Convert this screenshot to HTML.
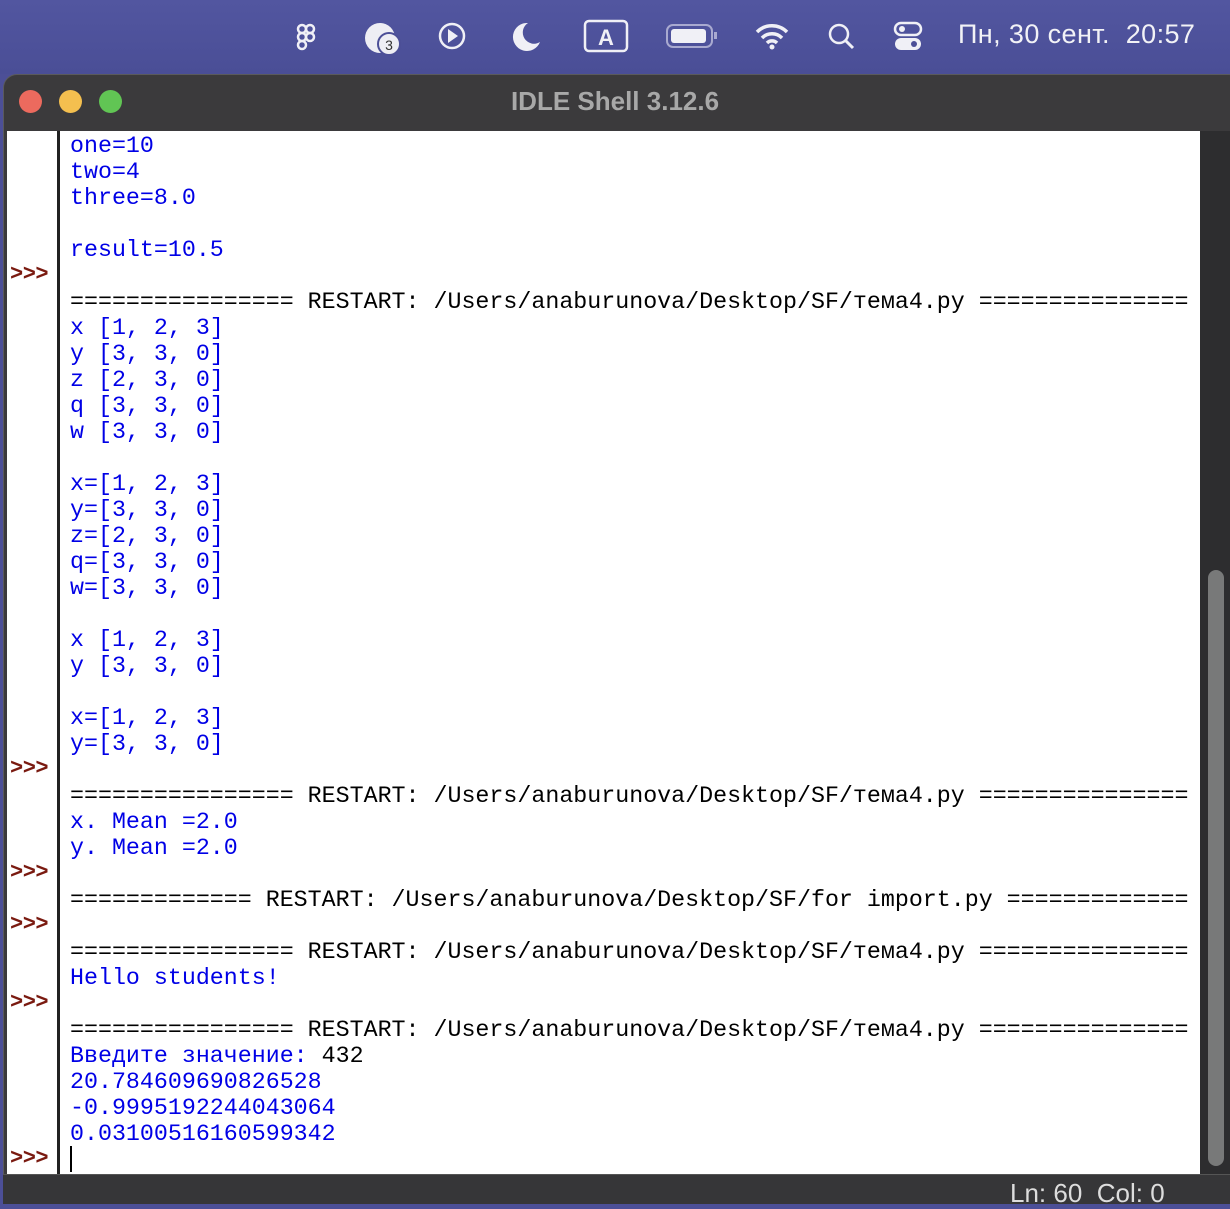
<!DOCTYPE html>
<html><head><meta charset="utf-8"><style>
*{margin:0;padding:0;box-sizing:border-box}
body{width:1230px;height:1194px;overflow:hidden;background:#4c4f97;font-family:"Liberation Sans",sans-serif;position:relative}
.menubar{position:absolute;left:0;top:0;width:1230px;height:74px;background:linear-gradient(#5256a0,#4a4e96)}
.clock{position:absolute;left:958px;top:19px;color:#f2f2f6;font-size:27px;letter-spacing:0.4px}
.win{position:absolute;left:3px;top:74px;width:1240px;height:1130px;background:#3b3a3c;border-radius:14px 14px 0 0;border:1px solid #5a5a5c}
.title{position:absolute;left:0;width:1230px;top:86px;text-align:center;color:#a8a8a8;font-weight:bold;font-size:26px}
.tl{position:absolute;top:90px;width:23px;height:23px;border-radius:50%}
.text{position:absolute;left:7px;top:131px;width:1193px;height:1043px;background:#fff;overflow:hidden}
.gutline{position:absolute;left:50px;top:0;width:3px;height:1043px;background:#222}
.lines{position:absolute;left:63px;top:2px;font-family:"Liberation Mono",monospace;font-size:23.3px;line-height:26px;white-space:pre;color:#0000e6}
.k{color:#000}
.p{position:absolute;left:3px;font-family:"Liberation Mono",monospace;font-size:22px;color:#7a1a10;font-weight:bold;letter-spacing:-0.5px}
.cur{position:absolute;left:63px;top:1015px;width:2px;height:26px;background:#000}
.sb{position:absolute;left:1200px;top:131px;width:30px;height:1043px;background:#2d2d2f}
.thumb{position:absolute;left:1208px;top:570px;width:16px;height:596px;background:#787979;border-radius:8px}
.status{position:absolute;left:3px;top:1174px;width:1230px;height:30px;background:#363638;border-top:1px solid #555}
.st{position:absolute;left:1010px;top:1178px;color:#ddd;font-size:26px;white-space:pre}
</style></head><body>
<div class="menubar">
<svg width="1230" height="74" style="position:absolute;left:0;top:0" fill="none" stroke="#f0f0f6" stroke-width="2.5">
<g transform="translate(297,24)"><rect x="1" y="1" width="8" height="8" rx="4"/><rect x="9" y="1" width="8" height="8" rx="4"/><rect x="1" y="9" width="8" height="8" rx="4"/><circle cx="13" cy="13" r="4"/><rect x="1" y="17" width="8" height="8" rx="4"/></g>
<circle cx="380" cy="38" r="15" fill="#eeeef4" stroke="none"/><circle cx="389" cy="44" r="11" fill="#eeeef4" stroke="#4c4f97" stroke-width="2"/>
<text x="389" y="50" font-size="14" fill="#333" stroke="none" text-anchor="middle" font-family="Liberation Sans">3</text>
<circle cx="452" cy="36" r="12"/><path d="M448 29 L458 36 L448 43Z" fill="#f0f0f6" stroke="none"/>
<path d="M528 23 A14 14 0 1 0 540 42 A11 11 0 0 1 528 23Z" fill="#f0f0f6" stroke="none"/>
<rect x="585" y="21" width="42" height="30" rx="4"/><text x="606" y="45" font-size="22" fill="#f0f0f6" stroke="none" text-anchor="middle" font-family="Liberation Sans" font-weight="bold">A</text>
<rect x="667" y="25" width="45" height="22" rx="6" stroke="#a9aad0" stroke-width="2"/><rect x="671" y="29" width="35" height="14" rx="3" fill="#f0f0f6" stroke="none"/><rect x="714" y="32" width="3" height="7" fill="#a9aad0" stroke="none"/>
<path d="M757 32 A21 21 0 0 1 787 32 M762 38 A14 14 0 0 1 782 38 M767 43 A7 7 0 0 1 777 43" stroke-width="3.5"/><circle cx="772" cy="47" r="2.5" fill="#f0f0f6" stroke="none"/>
<circle cx="839" cy="34" r="9"/><path d="M846 41 L853 48" stroke-width="3"/>
<rect x="895" y="23" width="26" height="12" rx="6"/><circle cx="902" cy="29" r="3" fill="#f0f0f6" stroke="none"/><rect x="895" y="38" width="26" height="12" rx="6" fill="#f0f0f6" stroke="none"/><circle cx="914" cy="44" r="3" fill="#4c4f97" stroke="none"/>
</svg>
<div class="clock">Пн, 30 сент.&nbsp; 20:57</div>
</div>
<div class="win"></div>
<div class="tl" style="left:19px;background:#ec6a5e"></div>
<div class="tl" style="left:59px;background:#f4bf4f"></div>
<div class="tl" style="left:99px;background:#61c554"></div>
<div class="title">IDLE Shell 3.12.6</div>
<div class="text">
<div class="gutline"></div>
<div class="p" style="top:131px">&gt;&gt;&gt;</div>
<div class="p" style="top:625px">&gt;&gt;&gt;</div>
<div class="p" style="top:729px">&gt;&gt;&gt;</div>
<div class="p" style="top:781px">&gt;&gt;&gt;</div>
<div class="p" style="top:859px">&gt;&gt;&gt;</div>
<div class="p" style="top:1015px">&gt;&gt;&gt;</div>
<div class="cur"></div>
<div class="lines">one=10
two=4
three=8.0

result=10.5

<span class="k">================ RESTART: /Users/anaburunova/Desktop/SF/тема4.py ===============</span>
x [1, 2, 3]
y [3, 3, 0]
z [2, 3, 0]
q [3, 3, 0]
w [3, 3, 0]

x=[1, 2, 3]
y=[3, 3, 0]
z=[2, 3, 0]
q=[3, 3, 0]
w=[3, 3, 0]

x [1, 2, 3]
y [3, 3, 0]

x=[1, 2, 3]
y=[3, 3, 0]

<span class="k">================ RESTART: /Users/anaburunova/Desktop/SF/тема4.py ===============</span>
x. Mean =2.0
y. Mean =2.0

<span class="k">============= RESTART: /Users/anaburunova/Desktop/SF/for import.py =============</span>

<span class="k">================ RESTART: /Users/anaburunova/Desktop/SF/тема4.py ===============</span>
Hello students!

<span class="k">================ RESTART: /Users/anaburunova/Desktop/SF/тема4.py ===============</span>
Введите значение: <span class="k">432</span>
20.784609690826528
-0.9995192244043064
0.03100516160599342
</div>
</div>
<div class="sb"></div>
<div class="thumb"></div>
<div class="status"></div>
<div class="st">Ln: 60  Col: 0</div>
</body></html>
